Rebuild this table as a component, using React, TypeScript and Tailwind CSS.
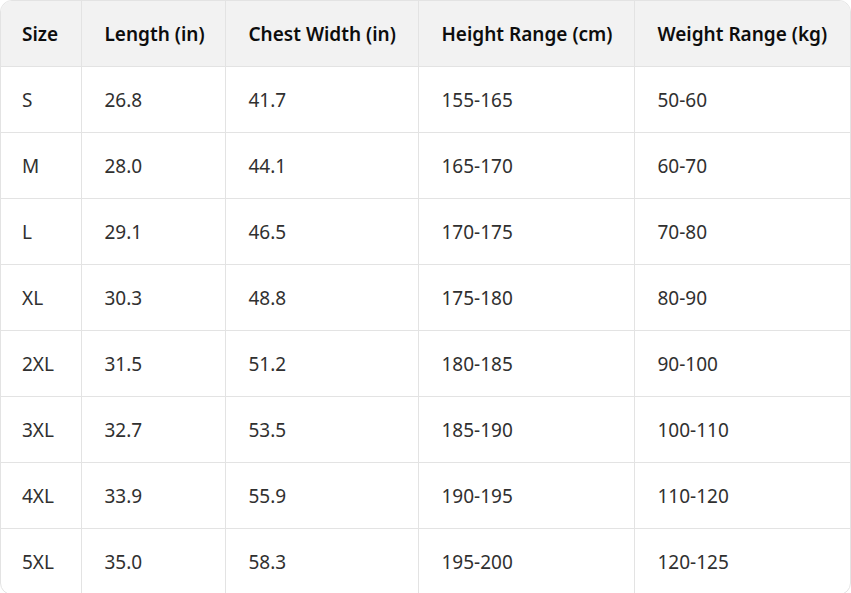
const headers = ['Size', 'Length (in)', 'Chest Width (in)', 'Height Range (cm)', 'Weight Range (kg)']

const rows = [
  ['S', '26.8', '41.7', '155-165', '50-60'],
  ['M', '28.0', '44.1', '165-170', '60-70'],
  ['L', '29.1', '46.5', '170-175', '70-80'],
  ['XL', '30.3', '48.8', '175-180', '80-90'],
  ['2XL', '31.5', '51.2', '180-185', '90-100'],
  ['3XL', '32.7', '53.5', '185-190', '100-110'],
  ['4XL', '33.9', '55.9', '190-195', '110-120'],
  ['5XL', '35.0', '58.3', '195-200', '120-125'],
]

const widths = ['w-[80px]', 'w-[144px]', 'w-[193px]', 'w-[216px]', 'w-[218px]']

export default function App() {
  return (
    <div className="w-[851px] h-[593px] bg-white font-['Noto_Sans',sans-serif]">
      <div className="rounded-xl border border-[#e3e3e3] overflow-hidden">
        <table className="w-full table-fixed border-collapse text-[19px]">
          <thead>
            <tr className="bg-[#f2f2f2] h-[65px]">
              {headers.map((h, i) => (
                <th
                  key={h}
                  className={`${widths[i]} text-left font-semibold text-[#0d0d0d] pt-[2px] ${i === 0 ? 'pl-[21px]' : 'pl-[23px]'} border-b border-[#e3e3e3] ${i < 4 ? 'border-r' : ''}`}
                >
                  {h}
                </th>
              ))}
            </tr>
          </thead>
          <tbody>
            {rows.map((r, ri) => (
              <tr key={r[0]} className="h-[66px]">
                {r.map((c, i) => (
                  <td
                    key={i}
                    className={`pt-[2px] ${i === 0 ? 'pl-[21px]' : 'pl-[23px]'} text-[#303030] border-[#e3e3e3] ${i < 4 ? 'border-r' : ''} ${ri < rows.length - 1 ? 'border-b' : ''}`}
                  >
                    {c}
                  </td>
                ))}
              </tr>
            ))}
          </tbody>
        </table>
      </div>
    </div>
  )
}
